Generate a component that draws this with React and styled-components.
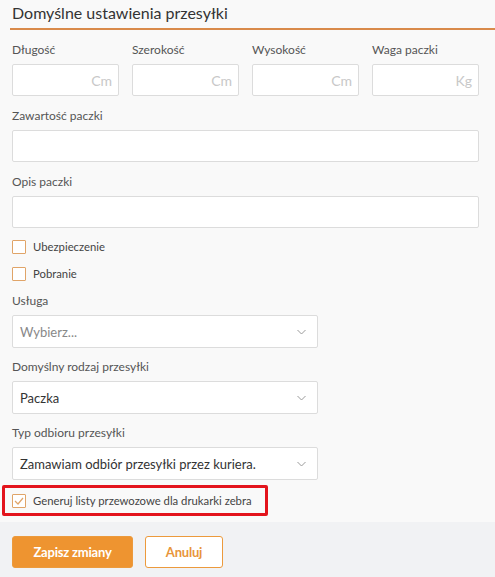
import React from 'react'
import styled, { createGlobalStyle } from 'styled-components'

const GlobalStyle = createGlobalStyle`
	html, body {
		margin: 0;
		padding: 0;
		background: #f9f9f9;
		font-family: Lato, "Open Sans", sans-serif;
	}
	* { box-sizing: border-box; }
`

const Page = styled.div`
	width: 495px;
	min-height: 577px;
	background: #f9f9f9;
	display: flex;
	flex-direction: column;
`

const Header = styled.div`
	margin-left: 10px;
	padding: 2px 0 0 2px;
	height: 30px;
	border-bottom: 2px solid #d98a4a;
`

const Title = styled.h2`
	margin: 0;
	font-size: 16px;
	font-weight: 400;
	line-height: 22px;
	color: #333;
`

const Body = styled.div`
	padding: 12px 16px 6px 12px;
	display: flex;
	flex-direction: column;
	gap: 12px;
`

const Grid = styled.div`
	display: grid;
	grid-template-columns: repeat(4, 107px);
	column-gap: 13px;
`

const Field = styled.div`
	display: flex;
	flex-direction: column;
	gap: 6px;
	width: ${p => p.$width || '100%'};
`

const SelectGroup = styled.div`
	display: flex;
	flex-direction: column;
	gap: 11px;
`

const Label = styled.label`
	font-size: 12px;
	line-height: 16px;
	color: #555;
`

const InputBox = styled.div`
	height: 32px;
	background: #fff;
	border: 1px solid #dcdcdc;
	border-radius: 2px;
	display: flex;
	align-items: center;
	justify-content: flex-end;
	padding-right: 6px;
	font-size: 14px;
	color: #c8c8c8;
`

const Checks = styled.div`
	display: flex;
	flex-direction: column;
	gap: 13px;
`

const CheckRow = styled.div`
	display: flex;
	align-items: center;
	gap: 7px;
	font-size: 11.3px;
	line-height: 14px;
	color: #444;
	white-space: nowrap;
`

const Box = styled.span`
	flex: none;
	width: 14px;
	height: 14px;
	border: 1px solid #e0a468;
	background: #fff;
	border-radius: 1px;
	display: flex;
	align-items: center;
	justify-content: center;
`

const Select = styled.div`
	height: 33px;
	background: #fff;
	border: 1px solid #dcdcdc;
	border-radius: 2px;
	display: flex;
	align-items: center;
	justify-content: space-between;
	padding: 0 11px 0 7px;
	font-size: 13px;
	color: ${p => (p.$placeholder ? '#888' : '#333')};
`

const Highlight = styled.div`
	margin: -7px 0 0 -10px;
	width: 266px;
	height: 31px;
	border: 3px solid #e3141c;
	border-radius: 2px;
	display: flex;
	align-items: center;
	padding-left: 7px;
`

const Footer = styled.div`
	flex: 1;
	background: #f1f2f4;
	padding: 14px 12px;
	display: flex;
	gap: 12px;
`

const Button = styled.button`
	height: 32px;
	width: ${p => p.$width};
	border-radius: 3px;
	font-family: Lato, sans-serif;
	font-weight: 700;
	font-size: 13px;
	letter-spacing: -0.2px;
	border: 1px solid #ec9a3c;
	background: ${p => (p.$primary ? '#ee9430' : '#fff')};
	color: ${p => (p.$primary ? '#fff' : '#e8953a')};
`

const Check = ({ checked, children }) => (
	<CheckRow>
		<Box>
			{checked && (
				<svg width="10" height="8" viewBox="0 0 10 8">
					<path d="M1 4 L4 7 L9 1" fill="none" stroke="#e0a468" strokeWidth="1.2" />
				</svg>
			)}
		</Box>
		{children}
	</CheckRow>
)

const Chevron = () => (
	<svg width="9" height="6" viewBox="0 0 9 6">
		<path d="M0.5 1 L4.5 5 L8.5 1" fill="none" stroke="#9a9a9a" strokeWidth="1" />
	</svg>
)

const SelectField = ({ label, value, placeholder }) => (
	<Field $width="306px">
		<Label>{label}</Label>
		<Select $placeholder={placeholder}>
			{value}
			<Chevron />
		</Select>
	</Field>
)

export default function App() {
	const dims = [
		['Długość', 'Cm'],
		['Szerokość', 'Cm'],
		['Wysokość', 'Cm'],
		['Waga paczki', 'Kg'],
	]
	return (
		<Page>
			<GlobalStyle />
			<Header>
				<Title>Domyślne ustawienia przesyłki</Title>
			</Header>
			<Body>
				<Grid>
					{dims.map(([l, u]) => (
						<Field key={l}>
							<Label>{l}</Label>
							<InputBox>{u}</InputBox>
						</Field>
					))}
				</Grid>
				<Field>
					<Label>Zawartość paczki</Label>
					<InputBox />
				</Field>
				<Field>
					<Label>Opis paczki</Label>
					<InputBox />
				</Field>
				<Checks>
					<Check>Ubezpieczenie</Check>
					<Check>Pobranie</Check>
				</Checks>
				<SelectGroup>
					<SelectField label="Usługa" value="Wybierz..." placeholder />
					<SelectField label="Domyślny rodzaj przesyłki" value="Paczka" />
					<SelectField label="Typ odbioru przesyłki" value="Zamawiam odbiór przesyłki przez kuriera." />
				</SelectGroup>
				<Highlight>
					<Check checked>Generuj listy przewozowe dla drukarki zebra</Check>
				</Highlight>
			</Body>
			<Footer>
				<Button $primary $width="121px">Zapisz zmiany</Button>
				<Button $width="78px">Anuluj</Button>
			</Footer>
		</Page>
	)
}
